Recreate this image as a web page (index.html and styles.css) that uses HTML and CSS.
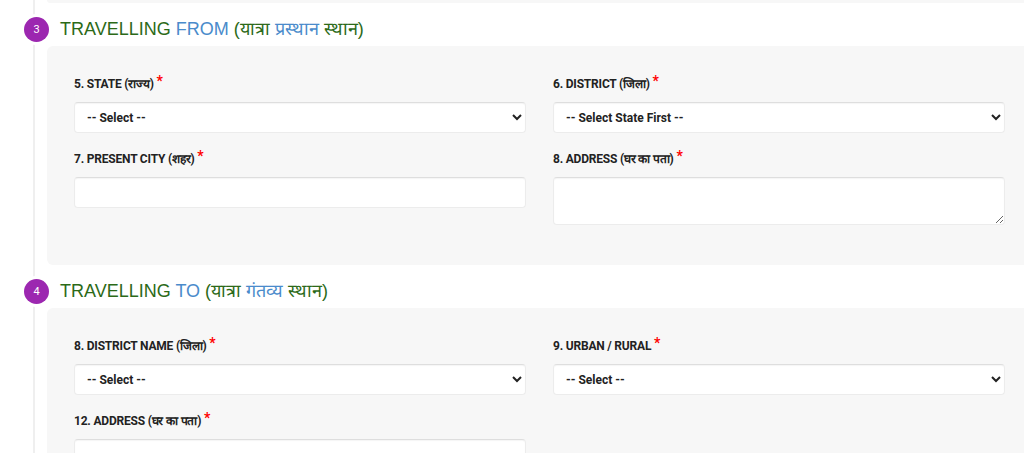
FILE: index.html
```html
<!DOCTYPE html>
<html lang="en">
<head>
    <meta charset="UTF-8">
    <meta name="viewport" content="width=device-width, initial-scale=1.0">
    <title>Travel Registration</title>
    <link rel="stylesheet" href="styles.css">
</head>
<body>
    <div class="timeline">
        <div class="card-tail"></div>

        <!-- Step 3: Travelling From -->
        <section class="step">
            <div class="step-head">
                <span class="badge">3</span>
                <h2><span class="green">TRAVELLING</span> <span class="blue">FROM</span> <span class="green">(यात्रा</span> <span class="blue">प्रस्थान</span> <span class="green">स्थान)</span></h2>
            </div>
            <div class="step-body">
                <div class="form-grid">
                    <div class="field">
                        <label>5. STATE (राज्य) <span class="req">*</span></label>
                        <select><option>-- Select --</option></select>
                    </div>
                    <div class="field">
                        <label>6. DISTRICT (जिला) <span class="req">*</span></label>
                        <select><option>-- Select State First --</option></select>
                    </div>
                    <div class="field">
                        <label>7. PRESENT CITY (शहर) <span class="req">*</span></label>
                        <input type="text">
                    </div>
                    <div class="field">
                        <label>8. ADDRESS (घर का पता) <span class="req">*</span></label>
                        <textarea></textarea>
                    </div>
                </div>
            </div>
        </section>

        <!-- Step 4: Travelling To -->
        <section class="step">
            <div class="step-head">
                <span class="badge">4</span>
                <h2><span class="green">TRAVELLING</span> <span class="blue">TO</span> <span class="green">(यात्रा</span> <span class="blue">गंतव्य</span> <span class="green">स्थान)</span></h2>
            </div>
            <div class="step-body">
                <div class="form-grid">
                    <div class="field">
                        <label>8. DISTRICT NAME (जिला) <span class="req">*</span></label>
                        <select><option>-- Select --</option></select>
                    </div>
                    <div class="field">
                        <label>9. URBAN / RURAL <span class="req">*</span></label>
                        <select><option>-- Select --</option></select>
                    </div>
                    <div class="field">
                        <label>12. ADDRESS (घर का पता) <span class="req">*</span></label>
                        <input type="text">
                    </div>
                </div>
            </div>
        </section>
    </div>
</body>
</html>
```

FILE: styles.css
```css
body {
    margin: 0;
    background: #fff;
    font-family: 'Liberation Sans', Arial, sans-serif;
    color: #222;
    height: 453px;
    overflow: hidden;
}

/* Timeline wrapper with the vertical rail */
.timeline {
    position: relative;
    min-height: 100vh;
}

.timeline::before {
    content: "";
    position: absolute;
    left: 33px;
    top: 0;
    bottom: 0;
    width: 2px;
    background: #efefef;
}

.card-tail {
    height: 3px;
    margin-left: 47px;
    background: #f7f7f7;
    border-bottom-left-radius: 6px;
}

/* Step header */
.step-head {
    position: relative;
    display: flex;
    align-items: flex-start;
    gap: 11px;
    height: 43px;
    padding: 0 0 0 24px;
    box-sizing: border-box;
    overflow: hidden;
}

.badge {
    display: flex;
    justify-content: center;
    align-items: center;
    flex: none;
    width: 25px;
    height: 25px;
    margin-top: 14px;
    border-radius: 50%;
    background: #9c27b0;
    color: #fff;
    font-size: 11px;
    font-family: Roboto, sans-serif;
    box-shadow: 0 0 0 3px #fff;
}

.step-head h2 {
    margin: 14px 0 0 0;
    height: 24px;
    font-size: 18px;
    font-weight: normal;
    line-height: 24px;
    white-space: nowrap;
}

.green {
    color: #2c6a18;
}

.blue {
    color: #4a8bcb;
}

/* Step body card */
.step-body {
    margin-left: 47px;
    background: #f7f7f7;
    border-radius: 6px 0 0 6px;
    padding: 28px 0 40px 27px;
}

.form-grid {
    display: grid;
    grid-template-columns: 452px 452px;
    column-gap: 27px;
    row-gap: 16px;
    align-items: start;
}

.field label {
    display: block;
    height: 18px;
    margin-bottom: 10px;
    font-family: Roboto, sans-serif;
    font-size: 12px;
    font-weight: bold;
    line-height: 18px;
    color: #222;
    letter-spacing: -0.2px;
    white-space: nowrap;
}

.req {
    color: #f00;
    font-size: 14px;
    position: relative;
    top: -2px;
}

.field select,
.field input,
.field textarea {
    display: block;
    width: 100%;
    box-sizing: border-box;
    height: 31px;
    margin: 0;
    border: 1px solid #ececec;
    border-top-color: #dedede;
    border-radius: 4px;
    background: #fff;
    box-shadow: inset 0 1px 1px rgba(0, 0, 0, 0.04);
    font-family: Roboto, sans-serif;
    font-size: 12px;
    font-weight: bold;
    color: #222;
}

.field select {
    padding: 0 8px;
}

.field textarea {
    height: 48px;
    resize: both;
}
```
